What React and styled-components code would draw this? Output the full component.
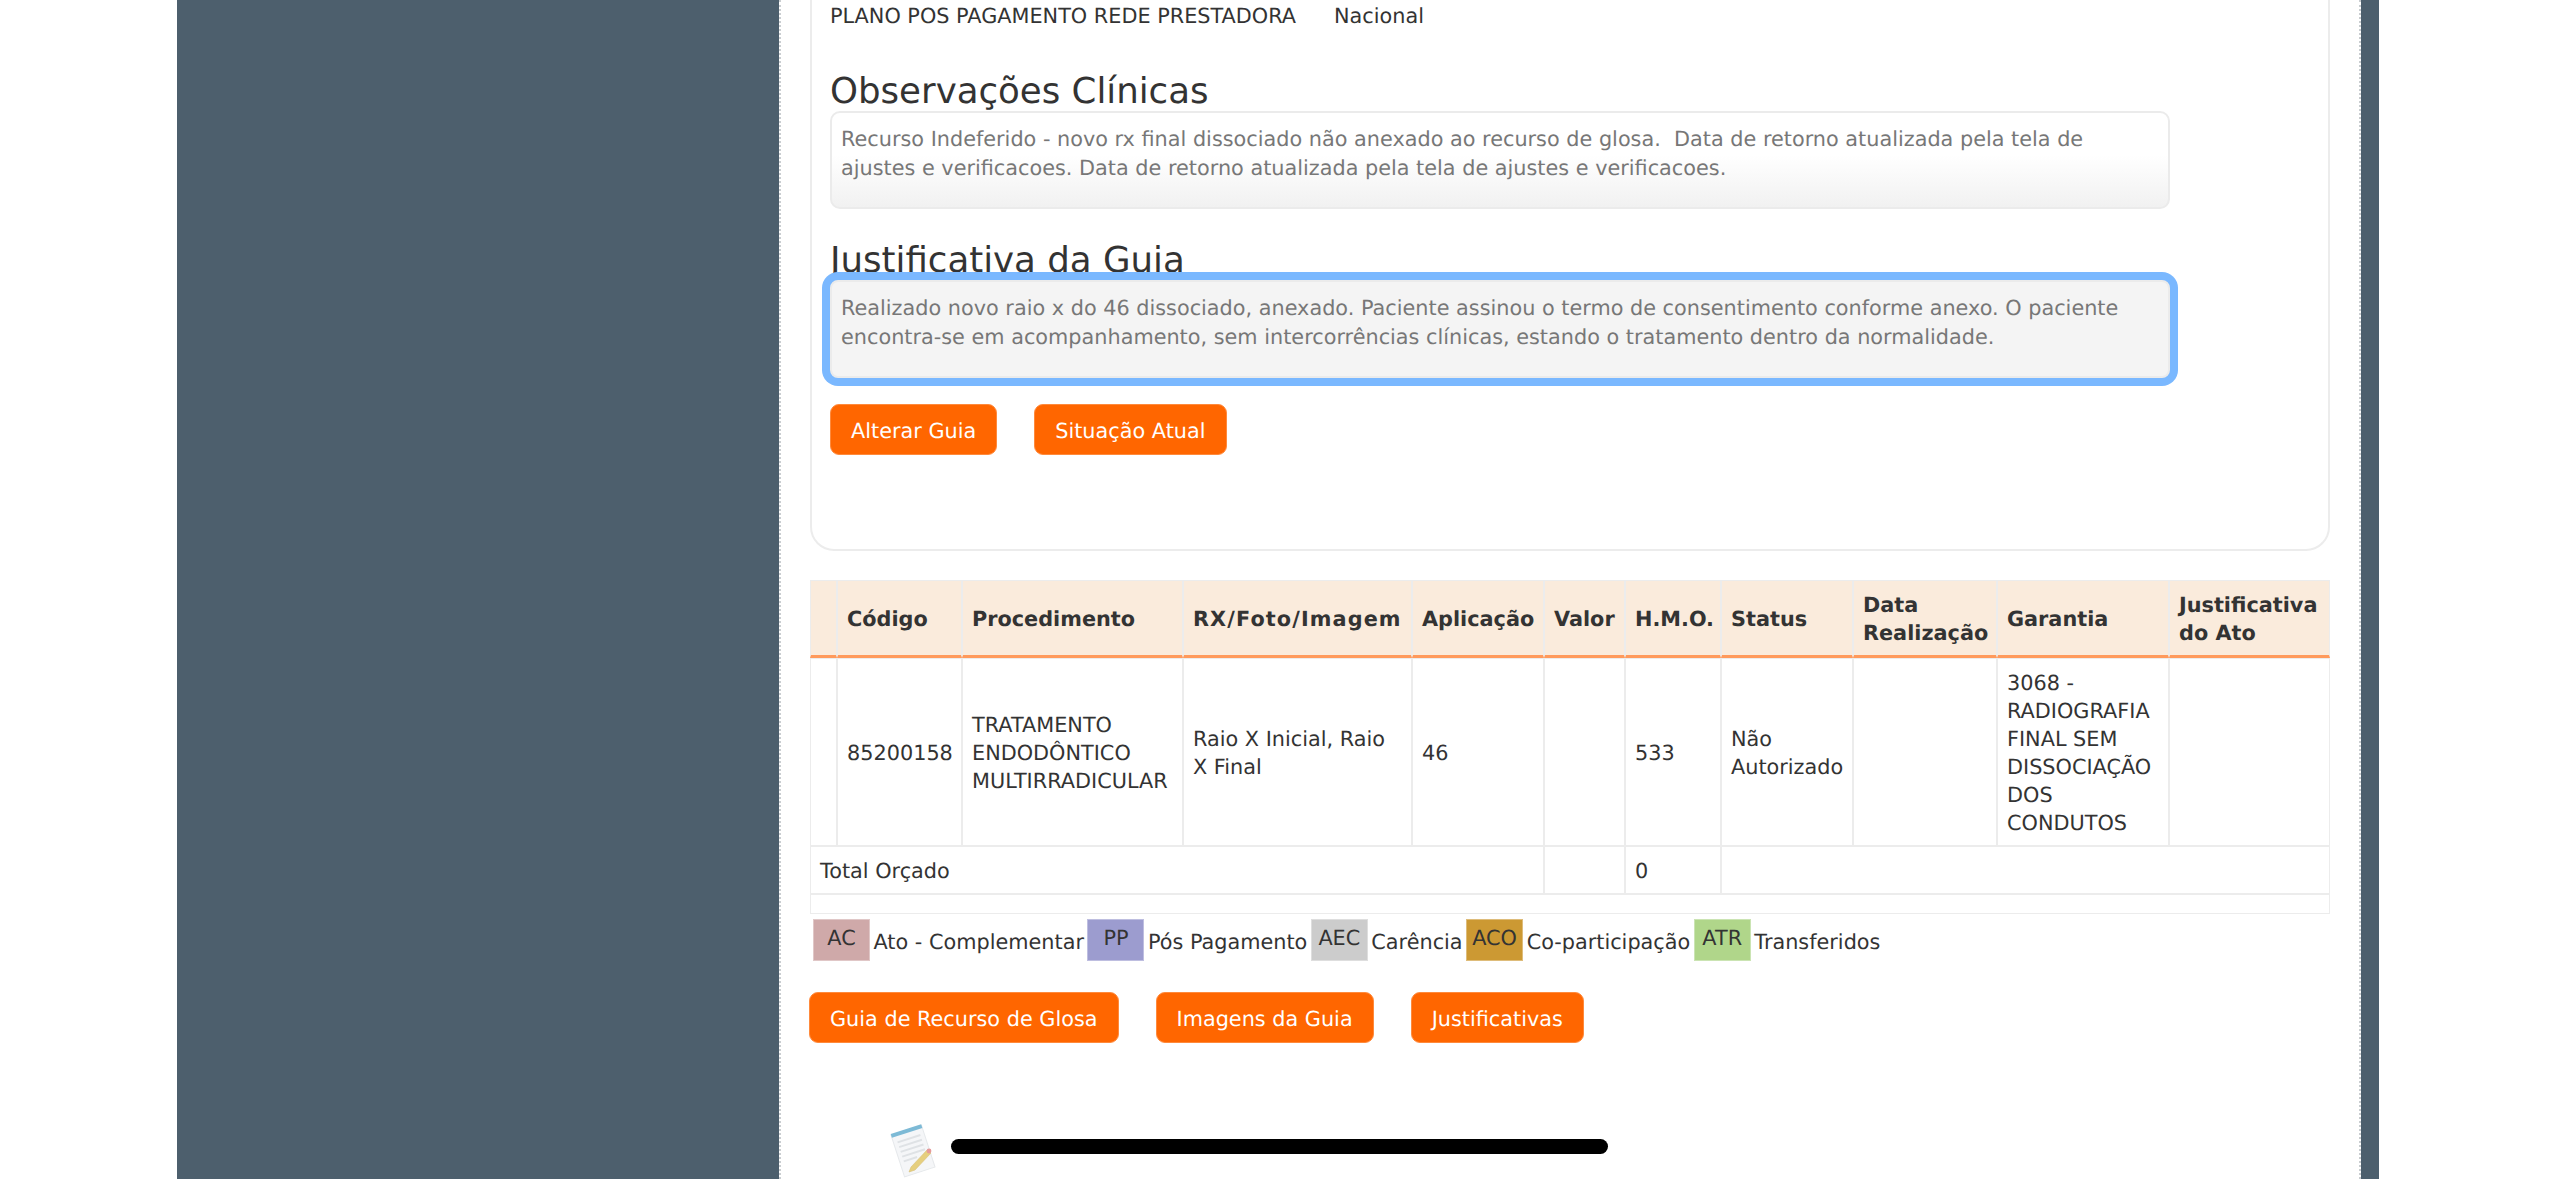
import React from 'react';
import styled, { createGlobalStyle } from 'styled-components';

const GlobalStyle = createGlobalStyle`
  html, body {
    margin: 0;
    padding: 0;
    height: 1179px;
    overflow: hidden;
    background: #fff;
  }
  body {
    font-family: "DejaVu Sans", Verdana, sans-serif;
    font-size: 20.8px;
    color: #333;
    text-rendering: geometricPrecision;
  }
`;

const Page = styled.div`
  display: grid;
  grid-template-columns: 177px 602px 1582px 18px 1fr;
  height: 1179px;
  overflow: hidden;
`;

const SideBar = styled.div`
  background: #4d5f6d;
`;

const Content = styled.main`
  background: #fff;
  border-left: 2px dotted #c9cdd0;
  border-right: 2px dotted #c9cdd0;
  padding: 0 29px 0 29px;
  box-sizing: border-box;
`;

const Card = styled.section`
  border: 2px solid #ececec;
  border-top: 0;
  border-radius: 0 0 24px 24px;
  height: 551px;
  box-sizing: border-box;
  padding: 0 18px;
`;

const InfoLine = styled.div`
  display: flex;
  gap: 38px;
  padding-top: 2px;
  line-height: 28px;
`;

const Heading = styled.h3`
  margin: ${p => p.$top}px 0 0;
  font-size: 35.6px;
  font-weight: 400;
  line-height: 44px;
  color: #333;
`;

const Note = styled.div`
  width: 1340px;
  height: 98px;
  margin-top: ${p => p.$top}px;
  box-sizing: border-box;
  padding: 12px 9px;
  border: 2px solid #ebebeb;
  font-size: 20.8px;
  line-height: 29px;
  color: #777;
  white-space: pre-wrap;
  background: ${p => (p.$focused ? '#f4f4f4' : 'linear-gradient(#fff 45%, #f1f1f1 100%)')};
  box-shadow: ${p => (p.$focused ? '0 0 0 8px #7ab8ff' : 'none')};
  border-radius: ${p => (p.$focused ? '8px' : '10px')};
  position: relative;
`;

const ButtonRow = styled.div`
  display: flex;
  gap: 37px;
  margin-top: ${p => p.$top}px;
`;

const OrangeButton = styled.button`
  height: 51px;
  padding: 2px 20px 0;
  font-family: inherit;
  font-size: 20.8px;
  text-rendering: inherit;
  color: #fff;
  background: #ff6600;
  border: 1px solid #ff8a3c;
  border-radius: 9px;
`;

const Table = styled.table`
  width: 1520px;
  margin-top: 29px;
  table-layout: fixed;
  border-collapse: separate;
  border-spacing: 0;
  font-size: 20.8px;
  line-height: 28px;
  color: #333;
`;

const HeadCell = styled.th`
  height: 78px;
  padding: 2px 9px 0;
  box-sizing: border-box;
  text-align: left;
  font-weight: 700;
  letter-spacing: ${p => (p.$wide ? '1.1px' : '0')};
  white-space: ${p => (p.$wide ? 'nowrap' : 'normal')};
  background: #faebdc;
  border: 1px solid #ececec;
  border-bottom: 3px solid #ff9a5c;
`;

const Cell = styled.td`
  padding: 2px 9px 0;
  box-sizing: border-box;
  height: ${p => p.$height}px;
  border: 1px solid #ececec;
`;

const Legend = styled.div`
  display: flex;
  align-items: flex-start;
  gap: 3.5px;
  margin: 5px 0 0 3px;
`;

const Swatch = styled.span`
  width: 57px;
  height: 42px;
  box-sizing: border-box;
  padding-top: 4px;
  text-align: center;
  background: ${p => p.$color};
  border: 1px solid rgba(255, 255, 255, 0.35);
  line-height: 28px;
`;

const SwatchLabel = styled.span`
  line-height: 28px;
  margin-top: 9px;
`;

const BottomButtons = styled(ButtonRow)`
  margin-left: -1px;
`;

const SignRow = styled.div`
  display: flex;
  align-items: flex-start;
  margin: 80px 0 0 75px;
  gap: 10px;
`;

const RedactedBar = styled.div`
  width: 657px;
  height: 15px;
  margin-top: 16px;
  background: #000;
  border-radius: 8px;
`;

const IconSvg = styled.svg`
  filter: blur(0.4px);
`;

const columns = [27, 125, 221, 229, 132, 81, 96, 132, 144, 172, 161];

const legend = [
  ['AC', '#cfa9a9', 'Ato - Complementar'],
  ['PP', '#9c9ccf', 'Pós Pagamento'],
  ['AEC', '#cccccc', 'Carência'],
  ['ACO', '#cc9933', 'Co-participação'],
  ['ATR', '#b0d68a', 'Transferidos'],
];

const NoteIcon = () => (
  <IconSvg width="56" height="56" viewBox="0 0 56 56">
    <g transform="rotate(-18 28 28)" opacity=".9">
      <rect x="12" y="6" width="32" height="44" fill="#f4f6f8" stroke="#e3e6e9" />
      <rect x="12" y="5" width="32" height="4" fill="#6fb3d2" />
      <path d="M16 15h24M16 20h24M16 25h24M16 30h24M16 35h14" stroke="#dcdfe3" strokeWidth="2" />
    </g>
    <path d="M26 44l16-17 4 3-16 17-6 2z" fill="#e6cf7e" stroke="#d6c078" strokeWidth=".6" />
    <circle cx="44" cy="28" r="2.4" fill="#e59a9a" />
  </IconSvg>
);

export default function App() {
  return (
    <>
      <GlobalStyle />
      <Page>
        <div />
        <SideBar />
        <Content>
          <Card>
            <InfoLine>
              <span>PLANO POS PAGAMENTO REDE PRESTADORA</span>
              <span>Nacional</span>
            </InfoLine>
            <Heading $top={40}>Observações Clínicas</Heading>
            <Note $top={-3}>{'Recurso Indeferido - novo rx final dissociado não anexado ao recurso de glosa.  Data de retorno atualizada pela tela de ajustes e verificacoes. Data de retorno atualizada pela tela de ajustes e verificacoes.'}</Note>
            <Heading $top={30}>Justificativa da Guia</Heading>
            <Note $top={-3} $focused>Realizado novo raio x do 46 dissociado, anexado. Paciente assinou o termo de consentimento conforme anexo. O paciente encontra-se em acompanhamento, sem intercorrências clínicas, estando o tratamento dentro da normalidade.</Note>
            <ButtonRow $top={26}>
              <OrangeButton>Alterar Guia</OrangeButton>
              <OrangeButton>Situação Atual</OrangeButton>
            </ButtonRow>
          </Card>
          <Table>
            <colgroup>
              {columns.map((w, i) => <col key={i} width={w} />)}
            </colgroup>
            <thead>
              <tr>
                <HeadCell />
                <HeadCell>Código</HeadCell>
                <HeadCell>Procedimento</HeadCell>
                <HeadCell $wide>RX/Foto/Imagem</HeadCell>
                <HeadCell>Aplicação</HeadCell>
                <HeadCell>Valor</HeadCell>
                <HeadCell>H.M.O.</HeadCell>
                <HeadCell>Status</HeadCell>
                <HeadCell>Data Realização</HeadCell>
                <HeadCell>Garantia</HeadCell>
                <HeadCell>Justificativa do Ato</HeadCell>
              </tr>
            </thead>
            <tbody>
              <tr>
                <Cell $height={188} />
                <Cell>85200158</Cell>
                <Cell>TRATAMENTO ENDODÔNTICO MULTIRRADICULAR</Cell>
                <Cell>Raio X Inicial, Raio X Final</Cell>
                <Cell>46</Cell>
                <Cell />
                <Cell>533</Cell>
                <Cell>Não Autorizado</Cell>
                <Cell />
                <Cell>3068 - RADIOGRAFIA FINAL SEM DISSOCIAÇÃO DOS CONDUTOS</Cell>
                <Cell />
              </tr>
              <tr>
                <Cell $height={48} colSpan={5}>Total Orçado</Cell>
                <Cell />
                <Cell>0</Cell>
                <Cell colSpan={4} />
              </tr>
              <tr>
                <Cell $height={20} colSpan={11} />
              </tr>
            </tbody>
          </Table>
          <Legend>
            {legend.map(([code, color, label]) => (
              <React.Fragment key={code}>
                <Swatch $color={color}>{code}</Swatch>
                <SwatchLabel>{label}</SwatchLabel>
              </React.Fragment>
            ))}
          </Legend>
          <BottomButtons $top={31}>
            <OrangeButton>Guia de Recurso de Glosa</OrangeButton>
            <OrangeButton>Imagens da Guia</OrangeButton>
            <OrangeButton>Justificativas</OrangeButton>
          </BottomButtons>
          <SignRow>
            <NoteIcon />
            <RedactedBar />
          </SignRow>
        </Content>
        <SideBar />
        <div />
      </Page>
    </>
  );
}
